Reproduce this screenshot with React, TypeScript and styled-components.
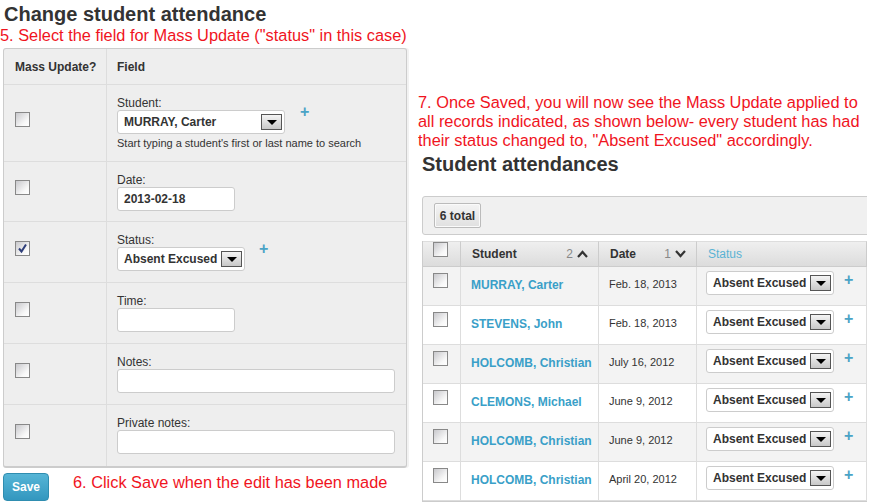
import React from "react";
import styled, { createGlobalStyle } from "styled-components";

const Global = createGlobalStyle`
  html, body { margin: 0; padding: 0; background: #fff; }
  body { font-family: "Liberation Sans", Arial, sans-serif; color: #333; width: 874px; height: 504px; overflow: hidden; }
`;

const Page = styled.div`
  display: flex;
  align-items: flex-start;
  width: 874px;
`;

const LeftCol = styled.div`
  width: 410px;
  flex: none;
  display: flex;
  flex-direction: column;
`;

const Title = styled.h1<{ $indent?: number }>`
  margin: 3px 0 0 ${(p) => p.$indent ?? 4}px;
  font-size: 20px;
  line-height: 23px;
  font-weight: bold;
  color: #333;
`;

const Note = styled.div<{ $indent?: number }>`
  color: #f0141e;
  font-size: 16.35px;
  line-height: 19px;
  white-space: nowrap;
  margin-left: ${(p) => p.$indent ?? 0}px;
`;

const Panel = styled.div`
  margin: 3px 0 0 3px;
  width: 402px;
  background: #eee;
  border: 1px solid #ccc;
  border-bottom: 2px solid #ccc;
  border-radius: 3px;
  box-shadow: 2px 0 0 #f2f2f2;
  display: grid;
  grid-template-columns: 102px 1fr;
`;

const HeadCell = styled.div`
  height: 35px;
  display: flex;
  align-items: center;
  padding-left: 11px;
  font-size: 12px;
  font-weight: bold;
  color: #333;
  border-bottom: 1px solid #ddd;
  & + & { border-left: 1px solid #ddd; padding-left: 10px; }
`;

const CheckCell = styled.div<{ $h: number; $last?: boolean }>`
  height: ${(p) => p.$h}px;
  box-sizing: border-box;
  display: flex;
  align-items: center;
  padding-left: 11px;
  padding-bottom: 8px;
  border-bottom: ${(p) => (p.$last ? "none" : "1px solid #ddd")};
`;

const FieldCell = styled.div<{ $h: number; $last?: boolean }>`
  height: ${(p) => p.$h}px;
  box-sizing: border-box;
  padding: 12px 10px 0 10px;
  border-left: 1px solid #ddd;
  border-bottom: ${(p) => (p.$last ? "none" : "1px solid #ddd")};
`;

const Label = styled.div`
  font-size: 12px;
  line-height: 13px;
  color: #333;
`;

const Help = styled.div`
  font-size: 11px;
  line-height: 14px;
  color: #333;
  margin-top: 2px;
`;

const InlineRow = styled.div`
  display: flex;
  align-items: flex-start;
`;

const Box = styled.div<{ $w: number }>`
  width: ${(p) => p.$w}px;
  height: 24px;
  box-sizing: border-box;
  background: #fff;
  border: 1px solid #ccc;
  border-radius: 3px;
  display: flex;
  align-items: center;
  padding: 0 2px 0 6px;
  font-size: 12px;
  font-weight: bold;
  color: #333;
  white-space: nowrap;
  justify-content: space-between;
`;

const Arrow = styled.span`
  width: 21px;
  height: 16px;
  box-sizing: border-box;
  border: 1px solid #555;
  background: linear-gradient(#f4f4f4, #c8c8c8);
  display: flex;
  align-items: center;
  justify-content: center;
  flex: none;
  &::after {
    content: "";
    border-left: 5px solid transparent;
    border-right: 5px solid transparent;
    border-top: 5px solid #000;
  }
`;

const Plus = styled.span<{ $ml: number; $mt?: number }>`
  color: #4aa3c6;
  font-size: 16px;
  font-weight: bold;
  line-height: 14px;
  margin-left: ${(p) => p.$ml}px;
  margin-top: ${(p) => p.$mt ?? 0}px;
`;

const Check = styled.span`
  width: 15px;
  height: 15px;
  box-sizing: border-box;
  border: 1px solid #888;
  background: linear-gradient(135deg, #c8c8cc, #f8f8f8 70%, #fff);
  display: inline-flex;
  align-items: center;
  justify-content: center;
  flex: none;
`;

const Footer = styled.div`
  display: flex;
  align-items: flex-start;
  margin-top: 5px;
  margin-left: 3px;
`;

const SaveBtn = styled.button`
  width: 46px;
  height: 28px;
  border: 1px solid #2f8db0;
  border-radius: 4px;
  background: linear-gradient(#56b5d6, #3397bf);
  color: #fff;
  font-family: "Liberation Sans", Arial, sans-serif;
  font-weight: bold;
  font-size: 12px;
  padding: 0;
`;

const FooterNote = styled(Note)`
  margin-left: 24px;
  margin-top: 0;
`;

const RightCol = styled.div`
  width: 449px;
  margin-left: 8px;
  padding-top: 93px;
  display: flex;
  flex-direction: column;
  overflow: hidden;
`;

const Toolbar = styled.div`
  margin: 20px 0 0 4px;
  width: 460px;
  height: 39px;
  box-sizing: border-box;
  background: #f0f0f0;
  border: 1px solid #ccc;
  border-radius: 3px;
  padding: 6px 0 0 11px;
`;

const TotalBtn = styled.div`
  width: 47px;
  height: 25px;
  box-sizing: border-box;
  border: 1px solid #bbb;
  border-radius: 2px;
  background: linear-gradient(#f4f4f4, #e0e0e0);
  box-shadow: inset 0 0 0 1px #fafafa;
  font-size: 12px;
  font-weight: bold;
  color: #333;
  display: flex;
  align-items: center;
  justify-content: center;
`;

const Table = styled.div`
  margin: 6px 0 0 4px;
  width: 470px;
  border: 1px solid #ccc;
  border-top: none;
  display: grid;
  grid-template-columns: 37px 138px 98px 170px 1fr;
`;

const TH = styled.div<{ $link?: boolean }>`
  height: 26px;
  box-sizing: border-box;
  background: linear-gradient(#efefef, #dcdcdc);
  border-top: 1px solid #ddd;
  border-bottom: 1px solid #ccc;
  border-left: 1px solid #ccc;
  &:first-child { border-left: none; }
  display: flex;
  align-items: center;
  justify-content: space-between;
  padding: 0 10px 0 11px;
  font-size: 12px;
  font-weight: ${(p) => (p.$link ? "normal" : "bold")};
  color: ${(p) => (p.$link ? "#5ab3d4" : "#333")};
`;

const THCheck = styled(TH)`
  align-items: flex-start;
  padding: 0 0 0 10px;
`;

const Sort = styled.span`
  display: inline-flex;
  align-items: center;
  gap: 4px;
  font-weight: normal;
  color: #888;
`;

const TD = styled.div<{ $alt: boolean }>`
  height: 39px;
  box-sizing: border-box;
  background: ${(p) => (p.$alt ? "#f3f3f3" : "#fff")};
  border-bottom: 1px solid #ddd;
  border-left: 1px solid #ddd;
  display: flex;
  align-items: flex-start;
  padding: 11px 0 0 10px;
  font-size: 11px;
  color: #333;
`;

const TDCheck = styled(TD)`
  border-left: none;
  padding: 6px 0 0 10px;
`;

const TDStatus = styled(TD)`
  padding: 4px 0 0 9px;
`;

const NameLink = styled.a`
  color: #3a9fc8;
  font-weight: bold;
  font-size: 12px;
  text-decoration: none;
`;

const CheckMark = () => (
  <svg width="11" height="11" viewBox="0 0 11 11">
    <path d="M2 5.5 L4.5 8.5 L9 1.5" fill="none" stroke="#2f3f7a" strokeWidth="2" />
  </svg>
);

const Chevron = ({ up }: { up: boolean }) => (
  <svg width="11" height="8" viewBox="0 0 11 8">
    <path d={up ? "M1 7 L5.5 2 L10 7" : "M1 1 L5.5 6 L10 1"} fill="none" stroke="#333" strokeWidth="2.2" />
  </svg>
);

const fields = [
  { h: 77, label: "Student:" },
  { h: 60, label: "Date:" },
  { h: 61, label: "Status:" },
  { h: 61, label: "Time:" },
  { h: 61, label: "Notes:" },
  { h: 61, label: "Private notes:" },
];

const rows = [
  ["MURRAY, Carter", "Feb. 18, 2013"],
  ["STEVENS, John", "Feb. 18, 2013"],
  ["HOLCOMB, Christian", "July 16, 2012"],
  ["CLEMONS, Michael", "June 9, 2012"],
  ["HOLCOMB, Christian", "June 9, 2012"],
  ["HOLCOMB, Christian", "April 20, 2012"],
];

function FieldContent({ i }: { i: number }) {
  switch (i) {
    case 0:
      return (
        <>
          <InlineRow>
            <Box $w={168}>
              MURRAY, Carter <Arrow />
            </Box>
            <Plus $ml={15} $mt={-5}>+</Plus>
          </InlineRow>
          <Help>Start typing a student's first or last name to search</Help>
        </>
      );
    case 1:
      return <Box $w={118}>2013-02-18</Box>;
    case 2:
      return (
        <InlineRow>
          <Box $w={128}>
            Absent Excused <Arrow />
          </Box>
          <Plus $ml={14} $mt={-5}>+</Plus>
        </InlineRow>
      );
    case 3:
      return <Box $w={118} />;
    default:
      return <Box $w={278} />;
  }
}

export default function App() {
  return (
    <>
      <Global />
      <Page>
        <LeftCol>
          <Title>Change student attendance</Title>
          <Note>5. Select the field for Mass Update ("status" in this case)</Note>
          <Panel>
            <HeadCell>Mass Update?</HeadCell>
            <HeadCell>Field</HeadCell>
            {fields.map((f, i) => (
              <React.Fragment key={f.label}>
                <CheckCell $h={f.h} $last={i === fields.length - 1}>
                  <Check>{i === 2 && <CheckMark />}</Check>
                </CheckCell>
                <FieldCell $h={f.h} $last={i === fields.length - 1}>
                  <Label>{f.label}</Label>
                  <FieldContent i={i} />
                </FieldCell>
              </React.Fragment>
            ))}
          </Panel>
          <Footer>
            <SaveBtn>Save</SaveBtn>
            <FooterNote>6. Click Save when the edit has been made</FooterNote>
          </Footer>
        </LeftCol>
        <RightCol>
          <Note>
            7. Once Saved, you will now see the Mass Update applied to
            <br />
            all records indicated, as shown below- every student has had
            <br />
            their status changed to, "Absent Excused" accordingly.
          </Note>
          <Title $indent={4}>Student attendances</Title>
          <Toolbar>
            <TotalBtn>6 total</TotalBtn>
          </Toolbar>
          <Table>
            <THCheck>
              <Check />
            </THCheck>
            <TH>
              Student
              <Sort>
                2 <Chevron up />
              </Sort>
            </TH>
            <TH>
              Date
              <Sort>
                1 <Chevron up={false} />
              </Sort>
            </TH>
            <TH $link>Status</TH>
            <TH />
            {rows.map(([name, date], i) => {
              const alt = i % 2 === 0;
              return (
                <React.Fragment key={i}>
                  <TDCheck $alt={alt}>
                    <Check />
                  </TDCheck>
                  <TD $alt={alt}>
                    <NameLink href="#">{name}</NameLink>
                  </TD>
                  <TD $alt={alt}>{date}</TD>
                  <TDStatus $alt={alt}>
                    <InlineRow>
                      <Box $w={128}>
                        Absent Excused <Arrow />
                      </Box>
                      <Plus $ml={10} $mt={2}>+</Plus>
                    </InlineRow>
                  </TDStatus>
                  <TD $alt={alt} />
                </React.Fragment>
              );
            })}
          </Table>
        </RightCol>
      </Page>
    </>
  );
}
